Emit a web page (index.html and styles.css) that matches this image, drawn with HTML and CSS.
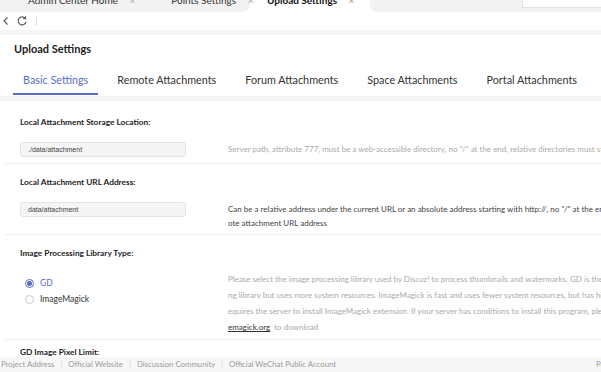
FILE: index.html
```html
<!DOCTYPE html>
<html lang="en">
<head>
  <meta charset="UTF-8">
  <meta name="viewport" content="width=device-width, initial-scale=1.0">
  <title>Upload Settings</title>
  <link rel="stylesheet" href="styles.css">
</head>
<body>
  <!-- Window tabs -->
  <div class="tabstrip">
    <div class="strip-left">
      <span class="wtab">Admin Center Home <i>&times;</i></span>
      <span class="wtab">Points Settings <i>&times;</i></span>
    </div>
    <div class="wtab wtab-active">Upload Settings <i>&times;</i></div>
    <div class="strip-right"><div class="search"></div></div>
  </div>

  <!-- Toolbar -->
  <div class="toolbar">
    <svg class="tool-icon" width="10" height="12" viewBox="0 0 10 12"><path d="M6.5 2.5L3 6l3.5 3.5" fill="none" stroke="#555" stroke-width="1.1"/></svg>
    <svg class="tool-icon" width="12" height="12" viewBox="0 0 12 12"><path d="M9.2 3.3A4 4 0 1 0 10 7" fill="none" stroke="#555" stroke-width="1.1"/><path d="M9.6 1.2v2.6H7" fill="none" stroke="#555" stroke-width="1.1"/></svg>
    <span class="divider"></span>
  </div>

  <main class="page">
    <section class="card head-card">
      <h1>Upload Settings</h1>
      <nav class="subtabs">
        <a class="subtab active" href="#basic">Basic Settings</a>
        <a class="subtab" href="#remote">Remote Attachments</a>
        <a class="subtab" href="#forum">Forum Attachments</a>
        <a class="subtab" href="#space">Space Attachments</a>
        <a class="subtab" href="#portal">Portal Attachments</a>
      </nav>
    </section>

    <section class="card form-card">
      <!-- Storage location -->
      <div class="row row-first">
        <div class="label">Local Attachment Storage Location:</div>
        <div class="field">
          <div class="control"><div class="input">./data/attachment</div></div>
          <div class="desc">
            <div class="line">Server path, attribute 777, must be a web-accessible directory, no "/" at the end, relative directories must start with "./"</div>
          </div>
        </div>
      </div>

      <!-- URL address -->
      <div class="row">
        <div class="label">Local Attachment URL Address:</div>
        <div class="field">
          <div class="control"><div class="input">data/attachment</div></div>
          <div class="desc desc-dark">
            <div class="line">Can be a relative address under the current URL or an absolute address starting with http://, no "/" at the end. If you use rem</div>
            <div class="line">ote attachment URL address</div>
          </div>
        </div>
      </div>

      <!-- Image library -->
      <div class="row">
        <div class="label">Image Processing Library Type:</div>
        <div class="field">
          <div class="control radios">
            <label class="radio checked"><span class="dot"></span>GD</label>
            <label class="radio"><span class="dot"></span>ImageMagick</label>
          </div>
          <div class="desc desc-tall">
            <div class="line">Please select the image processing library used by Discuz! to process thumbnails and watermarks. GD is the most widely used processi</div>
            <div class="line">ng library but uses more system resources. ImageMagick is fast and uses fewer system resources, but has higher requirements and r</div>
            <div class="line">equires the server to install ImageMagick extension. If your server has conditions to install this program, please visit http://www.imag</div>
            <div class="line"><a class="link" href="#im">emagick.org</a>&nbsp; to download</div>
          </div>
        </div>
      </div>

      <!-- GD limit -->
      <div class="row row-last">
        <div class="label">GD Image Pixel Limit:</div>
      </div>
    </section>
  </main>

  <footer class="footer">
    <span class="footer-links">Project Address <b>|</b> Official Website <b>|</b> Discussion Community <b>|</b> Official WeChat Public Account</span>
    <span class="footer-right">Powered by Discuz!</span>
  </footer>
</body>
</html>
```

FILE: styles.css
```css
/* Basic Styles */
* {
  box-sizing: border-box;
}

body {
  margin: 0;
  width: 601px;
  height: 372px;
  overflow: hidden;
  display: flex;
  flex-direction: column;
  font-family: Lato, "Open Sans", sans-serif;
  background-color: #f5f5f6;
  color: #222;
}

/* Window tabs */
.tabstrip {
  display: flex;
  height: 12px;
  flex-shrink: 0;
  background-color: #fff;
  overflow: hidden;
}

.strip-left {
  display: flex;
  width: 250px;
  padding-left: 28px;
  background-color: #f2f2f2;
  border-bottom-right-radius: 8px;
}

.wtab {
  font-size: 10px;
  line-height: 10px;
  margin-top: -5px;
  color: #333;
  white-space: nowrap;
}

.wtab i {
  font-style: normal;
  color: #aaa;
  margin-left: 9px;
}

.strip-left .wtab + .wtab {
  margin-left: 36px;
}

.wtab-active {
  width: 120px;
  padding-left: 17px;
  font-weight: 700;
  color: #111;
}

.strip-right {
  flex: 1;
  display: flex;
  justify-content: flex-end;
  background-color: #f2f2f2;
  border-bottom-left-radius: 8px;
}

.search {
  width: 79px;
  height: 8px;
  background-color: #fff;
  border: 1px solid #e2e2e2;
  border-top: none;
  border-right: none;
}

/* Toolbar */
.toolbar {
  display: flex;
  align-items: center;
  height: 18px;
  flex-shrink: 0;
  padding-left: 1px;
  gap: 5px;
  background-color: #fff;
}

.divider {
  width: 1px;
  height: 9px;
  margin-left: 3px;
  background-color: #ddd;
}

/* Page */
.page {
  flex: 1;
  overflow: hidden;
  padding-top: 5px;
}

.card {
  background-color: #fff;
}

.head-card {
  height: 61px;
  margin-bottom: 5px;
  padding: 7px 0 0 14px;
}

.head-card h1 {
  margin: 0;
  font-size: 11px;
  line-height: 14px;
  font-weight: 700;
  color: #222;
}

.subtabs {
  display: flex;
  margin: 17px 0 0 -1px;
}

.subtab {
  padding: 0 10px 6px;
  margin-right: 9px;
  font-size: 10.8px;
  line-height: 14px;
  color: #333;
  text-decoration: none;
  border-bottom: 2px solid transparent;
  white-space: nowrap;
}

.subtab.active {
  color: #5b6ec6;
  border-bottom-color: #5b6ec6;
}

/* Form rows */
.form-card {
  height: 100%;
}

.row {
  margin-left: 5px;
  padding: 12px 0 4px 15px;
  border-bottom: 1px solid #f0f0f0;
}

.row-first {
  padding-top: 15px;
}

.row-last {
  padding-top: 6px;
  border-bottom: none;
}

.label {
  font-size: 8.3px;
  line-height: 12px;
  font-weight: 700;
  color: #222;
  margin-bottom: 14px;
}

.field {
  display: flex;
  align-items: flex-start;
}

.control {
  width: 208px;
  flex-shrink: 0;
}

.input {
  width: 166px;
  height: 15px;
  margin-bottom: 2px;
  padding-left: 7px;
  background-color: #f5f5f5;
  border: 1px solid #e4e4e4;
  border-radius: 3px;
  font-family: "Liberation Sans", Arial, sans-serif;
  font-size: 7px;
  line-height: 13px;
  color: #444;
}

.desc {
  flex: 1;
  min-width: 0;
  font-size: 8px;
  line-height: 14px;
  color: #aaa;
}

.desc .line {
  white-space: nowrap;
  overflow: hidden;
}

.desc-dark {
  color: #444;
}

.desc-tall {
  line-height: 16px;
  margin-top: -2px;
}

.link {
  color: #333;
  text-decoration: underline;
}

/* Radios */
.radios {
  padding: 2px 0 0 5px;
}

.radio {
  display: flex;
  align-items: center;
  height: 16px;
  font-size: 8.5px;
  color: #333;
}

.radio .dot {
  width: 9px;
  height: 9px;
  margin-right: 6px;
  border: 1px solid #ccc;
  border-radius: 50%;
  background-color: #fff;
}

.radio.checked {
  color: #5b6ec6;
}

.radio.checked .dot {
  border-color: #5b6ec6;
  background: radial-gradient(circle, #5b6ec6 0 2.2px, #fff 2.7px);
}

/* Footer */
.footer {
  display: flex;
  height: 15px;
  flex-shrink: 0;
  padding-left: 1px;
  background-color: #f7f7f7;
  font-size: 7.8px;
  line-height: 15px;
  color: #999;
  white-space: nowrap;
  overflow: hidden;
}

.footer-links {
  flex: 0 0 595px;
}

.footer-links b {
  font-weight: 400;
  color: #ccc;
  margin: 0 4px;
}

.footer-right {
  flex-shrink: 0;
}
```
